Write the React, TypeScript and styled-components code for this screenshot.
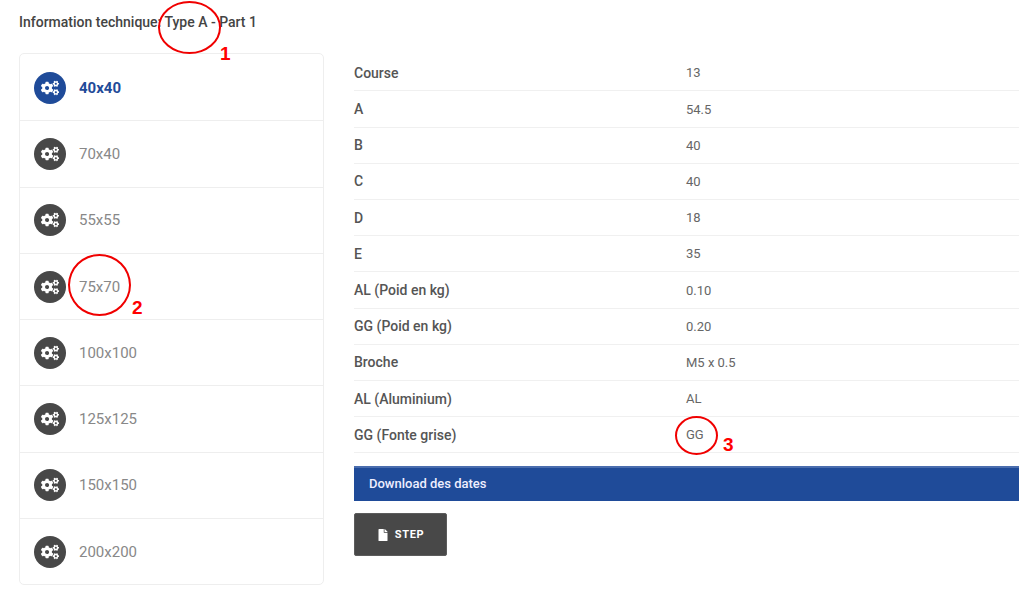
import React, { ReactElement } from "react";
import styled, { createGlobalStyle } from "styled-components";
import { FaCogs, FaFile } from "react-icons/fa";

const GlobalStyle = createGlobalStyle`
  html, body {
    margin: 0;
    padding: 0;
    background: #fff;
  }
  body {
    font-family: Roboto, "Liberation Sans", sans-serif;
    color: #555;
  }
`;

const Page = styled.div`
  position: relative;
  width: 1035px;
  height: 606px;
  overflow: hidden;
  box-sizing: border-box;
  padding: 14px 16px 0 19px;
`;

const Title = styled.h4`
  margin: 0 0 22px;
  font-size: 14px;
  line-height: 17px;
  font-weight: 500;
  color: #444;
`;

const Columns = styled.div`
  display: flex;
  align-items: flex-start;
  gap: 30px;
`;

const Sidebar = styled.ul`
  list-style: none;
  margin: 0;
  padding: 1px 0 0;
  width: 305px;
  box-sizing: border-box;
  border: 1px solid #eee;
  border-radius: 5px;
`;

const SizeItem = styled.li`
  display: flex;
  align-items: center;
  gap: 13px;
  height: 66.3px;
  box-sizing: border-box;
  padding-left: 14px;
  border-bottom: 1px solid #eee;
  &:last-child {
    height: 65px;
    border-bottom: none;
  }
`;

const IconDisc = styled.span<{ $active?: boolean }>`
  display: flex;
  align-items: center;
  justify-content: center;
  width: 32px;
  height: 32px;
  flex: none;
  border-radius: 50%;
  color: #fff;
  font-size: 18px;
  background: ${({ $active }) => ($active ? "#1f4b99" : "#484848")};
`;

const SizeLabel = styled.span<{ $active?: boolean }>`
  font-size: 15px;
  font-weight: ${({ $active }) => ($active ? 700 : 400)};
  color: ${({ $active }) => ($active ? "#1f4b99" : "#888")};
`;

const Details = styled.div`
  flex: 1;
  padding-top: 2.3px;
`;

const SpecRow = styled.div`
  display: flex;
  align-items: center;
  height: 36.2px;
  box-sizing: border-box;
  border-bottom: 1px solid #f0f0f0;
  font-size: 13px;
  &:last-of-type {
    border-bottom: none;
  }
`;

const SpecName = styled.span`
  width: 332px;
  font-size: 14px;
  font-weight: 500;
  color: #555;
`;

const SpecValue = styled.span`
  color: #666;
`;

const DownloadBar = styled.div`
  display: flex;
  align-items: center;
  height: 35px;
  margin-top: 13px;
  padding: 0 0 2px 15px;
  box-sizing: border-box;
  background: #1f4b99;
  border-top: 2px solid #4a6dae;
  color: #eef;
  font-size: 13px;
  font-weight: 500;
`;

const StepButton = styled.button`
  display: flex;
  align-items: center;
  justify-content: center;
  gap: 6px;
  width: 93px;
  height: 43px;
  margin-top: 12px;
  padding: 0;
  background: #484848;
  border: 1px solid #5c5c5c;
  border-radius: 2px;
  color: #fff;
  font-family: inherit;
  font-size: 11px;
  font-weight: 700;
  letter-spacing: 0.7px;

  svg {
    font-size: 12px;
  }
`;

const Ring = styled.span<{ $x: number; $y: number; $w: number; $h: number }>`
  position: absolute;
  left: ${({ $x }) => $x}px;
  top: ${({ $y }) => $y}px;
  width: ${({ $w }) => $w}px;
  height: ${({ $h }) => $h}px;
  box-sizing: border-box;
  border: 2.5px solid #f00000;
  border-radius: 50%;
`;

const Mark = styled.span<{ $x: number; $y: number }>`
  position: absolute;
  left: ${({ $x }) => $x}px;
  top: ${({ $y }) => $y}px;
  font-family: "Liberation Sans", sans-serif;
  font-size: 19px;
  line-height: 22px;
  font-weight: 700;
  color: #f00;
`;

const sizes = ["40x40", "70x40", "55x55", "75x70", "100x100", "125x125", "150x150", "200x200"];

const specs = [
  ["Course", "13"],
  ["A", "54.5"],
  ["B", "40"],
  ["C", "40"],
  ["D", "18"],
  ["E", "35"],
  ["AL (Poid en kg)", "0.10"],
  ["GG (Poid en kg)", "0.20"],
  ["Broche", "M5 x 0.5"],
  ["AL (Aluminium)", "AL"],
  ["GG (Fonte grise)", "GG"],
];

export default function App(): ReactElement {
  return (
    <Page>
      <GlobalStyle />
      <Title>Information technique: Type A - Part 1</Title>
      <Columns>
        <Sidebar>
          {sizes.map((size, i) => (
            <SizeItem key={size}>
              <IconDisc $active={i === 0}>
                <FaCogs />
              </IconDisc>
              <SizeLabel $active={i === 0}>{size}</SizeLabel>
            </SizeItem>
          ))}
        </Sidebar>
        <Details>
          {specs.map(([name, value]) => (
            <SpecRow key={name}>
              <SpecName>{name}</SpecName>
              <SpecValue>{value}</SpecValue>
            </SpecRow>
          ))}
          <DownloadBar>Download des dates</DownloadBar>
          <StepButton>
            <FaFile />
            STEP
          </StepButton>
        </Details>
      </Columns>

      {/* red annotations drawn over the screenshot */}
      <Ring $x={158} $y={1} $w={63} $h={53} />
      <Mark $x={220} $y={43}>1</Mark>
      <Ring $x={68} $y={254} $w={63} $h={62} />
      <Mark $x={132} $y={297}>2</Mark>
      <Ring $x={675} $y={416} $w={43} $h={39} />
      <Mark $x={723} $y={434}>3</Mark>
    </Page>
  );
}
